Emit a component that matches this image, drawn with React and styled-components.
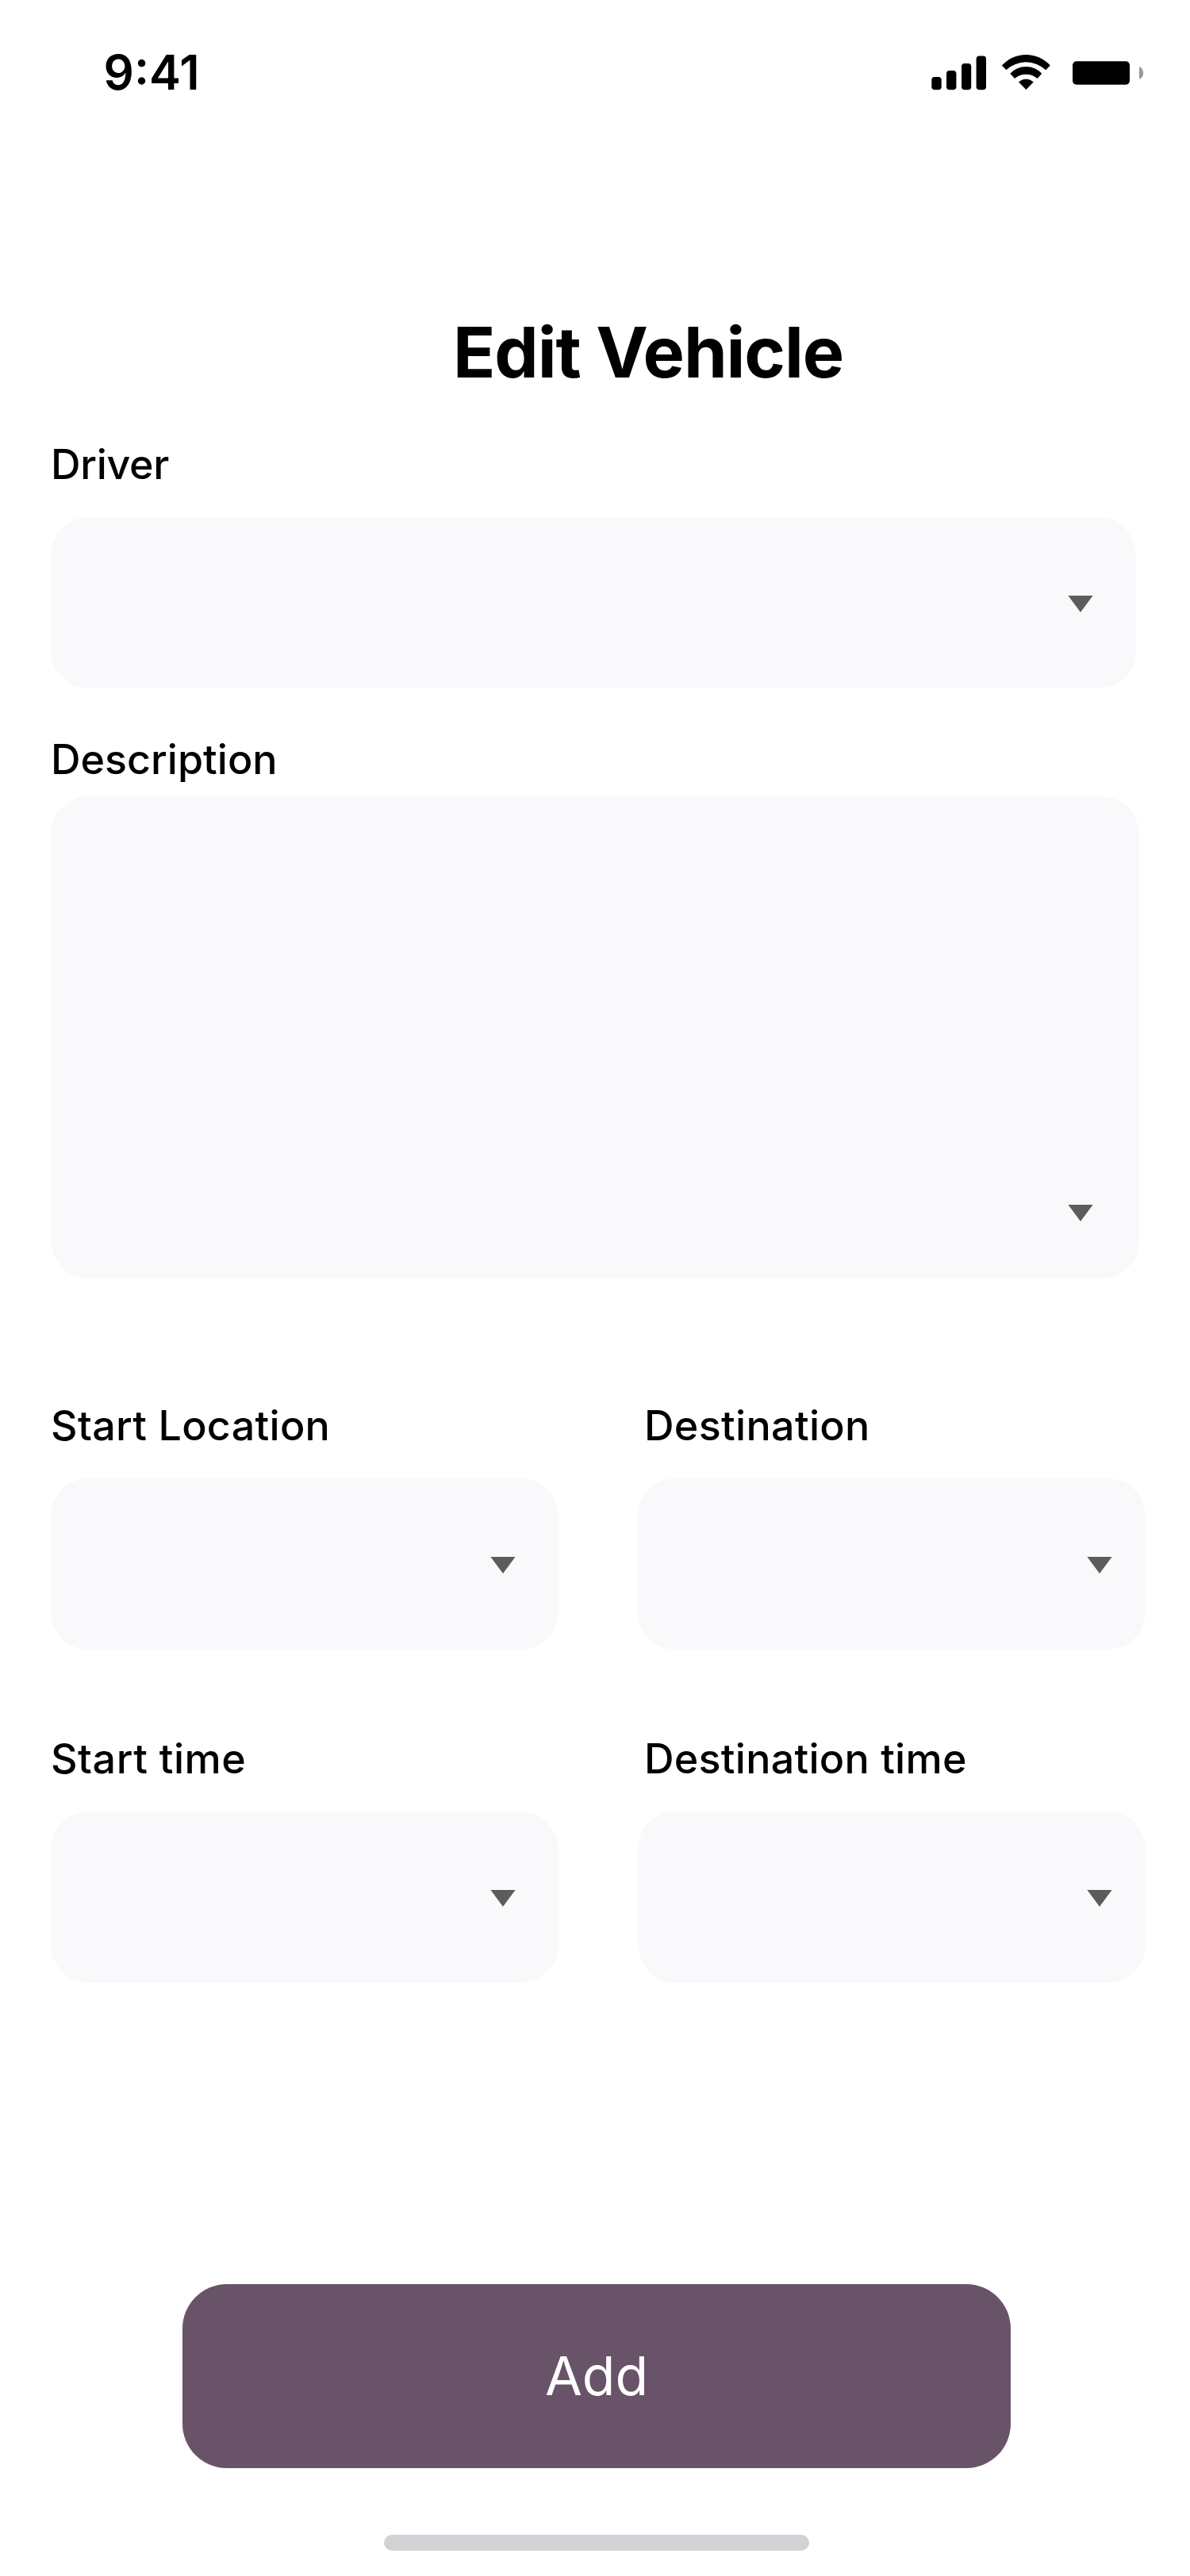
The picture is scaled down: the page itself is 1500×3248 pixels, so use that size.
import React from "react";
import styled, { createGlobalStyle } from "styled-components";

const GlobalStyle = createGlobalStyle`
  *, *::before, *::after { box-sizing: border-box; }
  body { margin: 0; background: #fff; }
`;

const Screen = styled.main`
  width: 1500px;
  height: 3248px;
  display: flex;
  flex-direction: column;
  background: #fff;
  color: #000;
  font-family: Inter, "Liberation Sans", sans-serif;
`;

const StatusBar = styled.header`
  height: 176px;
  padding: 55px 58px 0 130.6px;
  display: flex;
  justify-content: space-between;
  align-items: flex-start;
`;

const Clock = styled.time`
  font-size: 60px;
  line-height: 72px;
  font-weight: 600;
`;

const StatusIcons = styled.svg`
  display: block;
  width: 268px;
  height: 46px;
  margin-top: 13px;
`;

const Title = styled.h1`
  margin: 214px 0 0 571px;
  font-size: 88px;
  line-height: 108px;
  font-weight: 700;
  letter-spacing: -1.1px;
  white-space: nowrap;
`;

const Form = styled.form`
  display: flex;
  flex-direction: column;
  padding: 56px 56px 0 64px;
`;

const Field = styled.div`
  display: flex;
  flex-direction: column;
  gap: ${(p) => p.$gap || 34}px;
  margin-top: ${(p) => p.$top || 0}px;
  width: ${(p) => p.$width}px;
`;

const Label = styled.label`
  font-size: 52px;
  line-height: 64px;
  font-weight: 500;
  letter-spacing: ${(p) => p.$tracking || 0}px;
  white-space: nowrap;
  padding-left: ${(p) => p.$inset || 0}px;
`;

const Box = styled.div`
  height: ${(p) => p.$height || 216}px;
  display: flex;
  justify-content: flex-end;
  align-items: flex-end;
  padding: 0 ${(p) => p.$right}px ${(p) => p.$bottom || 96}px 0;
  border-radius: 48px;
  background: #f9f9fb;
`;

const ArrowIcon = styled.svg`
  display: block;
  width: 32px;
  height: 21px;
  fill: #5c5c5c;
`;

const Row = styled.div`
  display: flex;
  justify-content: space-between;
  margin-top: ${(p) => p.$top}px;
`;

const AddButton = styled.button`
  width: 1044px;
  height: 232px;
  margin: 380px 0 0 230px;
  padding: 0 0 2px;
  border: 0;
  border-radius: 56px;
  background: #695368;
  color: #fff;
  font-family: Inter, "Liberation Sans", sans-serif;
  font-size: 68px;
  font-weight: 400;
`;

const HomeIndicator = styled.div`
  width: 536px;
  height: 20px;
  margin: 84px 0 0 484px;
  border-radius: 10px;
  background: #d1d1d6;
`;

function Arrow() {
  return (
    <ArrowIcon viewBox="0 0 32 21">
      <path d="M0.4 0H31.6L16 21Z" />
    </ArrowIcon>
  );
}

function Select({ label, width, inset, right, top, gap, height, bottom, tracking }) {
  return (
    <Field $width={width} $top={top} $gap={gap}>
      <Label $inset={inset} $tracking={tracking}>{label}</Label>
      <Box $right={right} $height={height} $bottom={bottom}>
        <Arrow />
      </Box>
    </Field>
  );
}

export default function App() {
  return (
    <>
      <GlobalStyle />
      <Screen>
        <StatusBar>
          <Clock>9:41</Clock>
          <StatusIcons viewBox="1174 68 268 46">
            <rect x="1174.3" y="97" width="12.4" height="16.3" rx="4" />
            <rect x="1193" y="89" width="12.4" height="24.3" rx="4" />
            <rect x="1212" y="80" width="12.2" height="33.3" rx="4" />
            <rect x="1230.6" y="70.4" width="12.4" height="42.9" rx="4" />
            <path d="M1262.8 82.6A40.8 40.8 0 0 1 1323.8 82.6L1318.2 88.3A36 36 0 0 0 1268.4 88.3Z" />
            <path d="M1273.3 92.8A27.3 27.3 0 0 1 1313.3 92.8L1307.6 99A22.5 22.5 0 0 0 1279 99Z" />
            <path d="M1284 103.6A13 13 0 0 1 1302.7 103.6L1293.4 113Z" />
            <rect x="1352" y="77.2" width="72" height="29.5" rx="5" />
            <path d="M1436 84A8.8 8.8 0 0 1 1436 100Z" fill="#999" />
          </StatusIcons>
        </StatusBar>
        <Title>Edit Vehicle</Title>
        <Form onSubmit={(e) => e.preventDefault()}>
          <Select label="Driver" width={1368} right={54} tracking={-0.33} />
          <Select label="Description" width={1372} right={58} top={58} gap={14} height={608} bottom={72} />
          <Row $top={154}>
            <Select label="Start Location" width={640} right={54} tracking={0.3} />
            <Select label="Destination" width={640} right={42} inset={8} tracking={0.32} />
          </Row>
          <Row $top={106}>
            <Select label="Start time" width={640} right={54} tracking={0.52} />
            <Select label="Destination time" width={640} right={42} inset={8} tracking={0.26} />
          </Row>
        </Form>
        <AddButton type="button">Add</AddButton>
        <HomeIndicator />
      </Screen>
    </>
  );
}
